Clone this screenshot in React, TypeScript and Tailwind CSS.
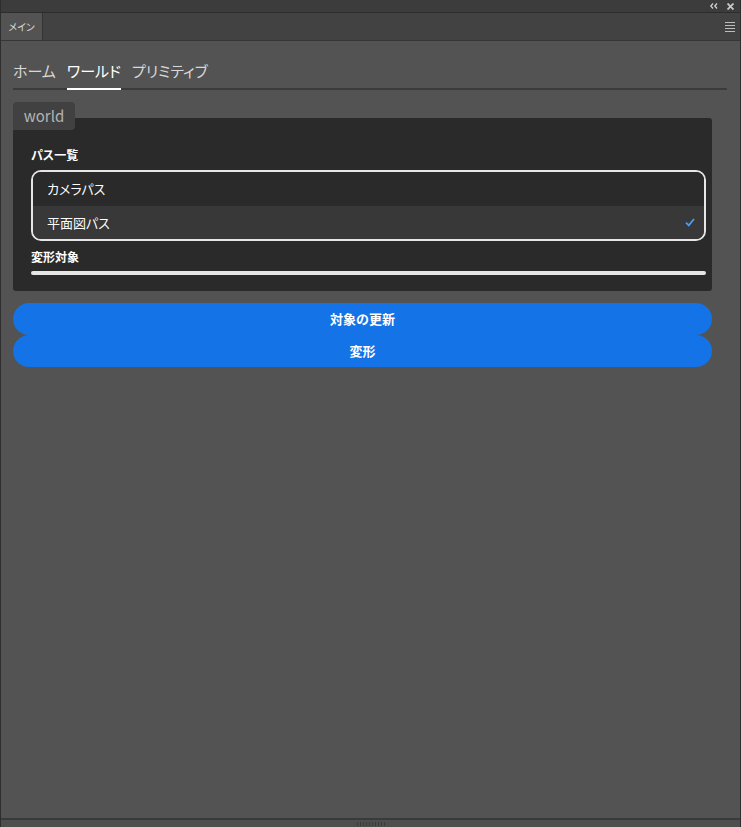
import { useState } from "react"

const tabs = ["ホーム", "ワールド", "プリミティブ"]
const paths = ["カメラパス", "平面図パス"]

const App = () => {
    const [activeTab, setActiveTab] = useState(1)
    const [selected, setSelected] = useState(1)

    return (
        <div
            className="w-[741px] h-[827px] flex flex-col bg-[#535353] border-x border-[#2e2e2e] overflow-hidden [font-feature-settings:'palt']"
            style={{ fontFamily: '"Noto Sans CJK JP", "Noto Sans", sans-serif' }}
        >
            {/* Top strip */}
            <div className="h-[13px] bg-[#3c3c3c] border-b border-[#2c2c2c] flex items-center justify-end gap-[9px] pr-[6px] shrink-0">
                <svg width="8" height="6" viewBox="0 0 8 6" className="text-[#d0d0d0]">
                    <path d="M3 0.5 L0.8 3 L3 5.5 M7 0.5 L4.8 3 L7 5.5" stroke="currentColor" strokeWidth="1.3" fill="none" />
                </svg>
                <svg width="7" height="7" viewBox="0 0 7 7" className="text-[#c8c8c8]">
                    <path d="M0.5 0.5 L6.5 6.5 M6.5 0.5 L0.5 6.5" stroke="currentColor" strokeWidth="1.8" />
                </svg>
            </div>

            {/* Panel tab bar */}
            <div className="h-[28px] bg-[#424242] border-b border-[#363636] flex items-stretch shrink-0">
                <div className="w-[42px] bg-[#535353] border-r border-[#353535] flex items-center justify-center text-[10px] text-[#d6d6d6]">
                    メイン
                </div>
                <div className="flex-1" />
                <div className="flex flex-col justify-center gap-[2px] pr-[5px]">
                    <div className="w-[10px] h-px bg-[#bdbdbd]" />
                    <div className="w-[10px] h-px bg-[#bdbdbd]" />
                    <div className="w-[10px] h-px bg-[#bdbdbd]" />
                    <div className="w-[10px] h-px bg-[#bdbdbd]" />
                </div>
            </div>

            {/* Body */}
            <div className="flex-1 px-[12px] pt-[18px]">
                {/* Tabs */}
                <div className="flex gap-[11px] border-b-2 border-[#3b3b3b] mr-[1px]">
                    {tabs.map((tab, index) => (
                        <button
                            key={tab}
                            onClick={() => setActiveTab(index)}
                            className={`pb-[5px] text-[15px] leading-[24px] -mb-[2px] border-b-2 ${index === activeTab
                                ? "text-white border-white"
                                : "text-[#d8d8d8] border-transparent"
                                }`}
                        >
                            {tab}
                        </button>
                    ))}
                </div>

                {/* world section */}
                <div className="mt-[12px] pr-[16px]">
                    <div className="w-[62px] h-[28px] bg-[#414141] rounded-t-[4px] rounded-br-[4px] flex items-center justify-center text-[15px] text-[#b4b4b4] relative z-10">
                        world
                    </div>
                    <div className="-mt-[12px] bg-[#2a2a2a] rounded-[3px] pt-[29px] pb-[16px] pl-[18px] pr-[6px]">
                        <div className="text-[12px] font-bold text-white leading-[16px]">パス一覧</div>
                        <div className="mt-[7px] border-2 border-[#e6e6e6] rounded-[10px] overflow-hidden">
                            {paths.map((path, index) => (
                                <div
                                    key={path}
                                    onClick={() => setSelected(index)}
                                    className={`flex items-center justify-between pl-[14px] pr-[9px] text-[13px] text-white ${index === selected ? "bg-[#383838] h-[33px]" : "bg-[#2a2a2a] h-[34px]"
                                        }`}
                                >
                                    <span>{path}</span>
                                    {index === selected && (
                                        <svg width="10" height="9" viewBox="0 0 10 9">
                                            <path d="M1 4.6 L3.8 7.4 L9 1" stroke="#4b9cf5" strokeWidth="1.8" fill="none" />
                                        </svg>
                                    )}
                                </div>
                            ))}
                        </div>
                        <div className="mt-[8px] text-[12px] font-bold text-white leading-[16px]">変形対象</div>
                        <div className="mt-[6px] h-[4px] rounded-full bg-[#e6e6e6]" />
                    </div>
                </div>

                {/* Buttons */}
                <div className="mt-[12px] pr-[16px] flex flex-col">
                    <button className="h-[32px] rounded-full bg-[#1473e6] text-white text-[13px] font-bold">
                        対象の更新
                    </button>
                    <button className="h-[32px] rounded-full bg-[#1473e6] text-white text-[13px] font-bold">
                        変形
                    </button>
                </div>
            </div>

            {/* Bottom strip */}
            <div className="h-[9px] bg-[#4e4e4e] border-t-2 border-[#3a3a3a] flex items-center justify-center shrink-0">
                <div className="flex gap-[2px]">
                    {[0, 1, 2, 3, 4, 5, 6, 7, 8, 9].map((i) => (
                        <div key={i} className="w-px h-[4px] bg-[#3a3a3a]" />
                    ))}
                </div>
            </div>
        </div>
    )
}

export default App
